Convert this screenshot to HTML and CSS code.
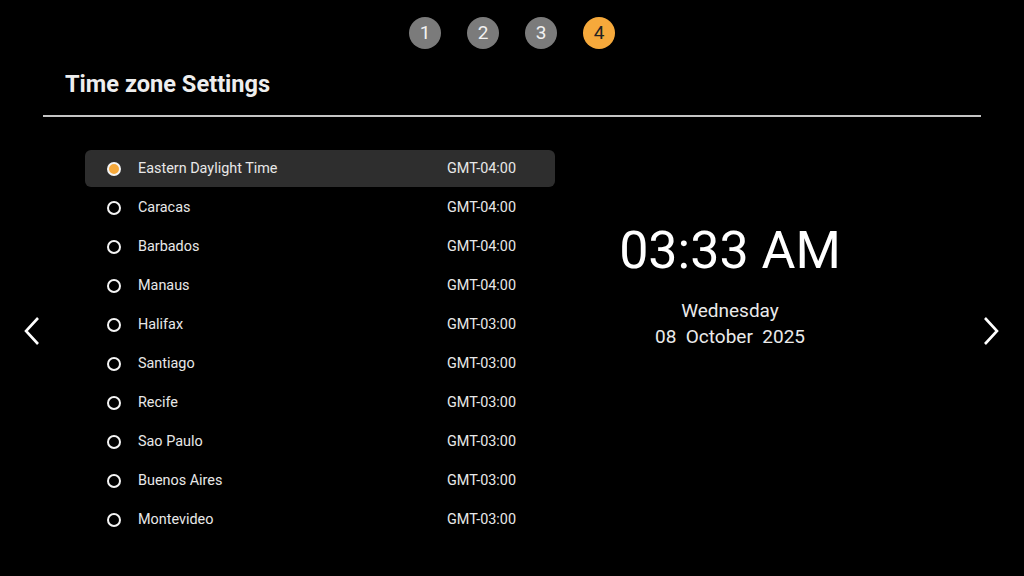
FILE: index.html
```html
<!DOCTYPE html>
<html>
<head>
    <meta charset="utf-8">
    <title>Time zone Settings</title>
    <link rel="stylesheet" href="styles.css">
</head>
<body>
<div class="page">
    <div class="steps">
        <span class="step">1</span>
        <span class="step">2</span>
        <span class="step">3</span>
        <span class="step active">4</span>
    </div>
    <h1 class="title">Time zone Settings</h1>
    <div class="divider"></div>

    <div class="content">
        <div class="nav nav-left">
            <svg width="18" height="30" viewBox="0 0 18 30"><path d="M15 2 L3 15 L15 28" fill="none" stroke="#fff" stroke-width="2.6"/></svg>
        </div>

        <ul class="zones">
            <li class="zone selected"><span class="radio"></span><span class="name">Eastern Daylight Time</span><span class="gmt">GMT-04:00</span></li>
            <li class="zone"><span class="radio"></span><span class="name">Caracas</span><span class="gmt">GMT-04:00</span></li>
            <li class="zone"><span class="radio"></span><span class="name">Barbados</span><span class="gmt">GMT-04:00</span></li>
            <li class="zone"><span class="radio"></span><span class="name">Manaus</span><span class="gmt">GMT-04:00</span></li>
            <li class="zone"><span class="radio"></span><span class="name">Halifax</span><span class="gmt">GMT-03:00</span></li>
            <li class="zone"><span class="radio"></span><span class="name">Santiago</span><span class="gmt">GMT-03:00</span></li>
            <li class="zone"><span class="radio"></span><span class="name">Recife</span><span class="gmt">GMT-03:00</span></li>
            <li class="zone"><span class="radio"></span><span class="name">Sao Paulo</span><span class="gmt">GMT-03:00</span></li>
            <li class="zone"><span class="radio"></span><span class="name">Buenos Aires</span><span class="gmt">GMT-03:00</span></li>
            <li class="zone"><span class="radio"></span><span class="name">Montevideo</span><span class="gmt">GMT-03:00</span></li>
        </ul>

        <div class="clock">
            <div class="time">03:33 AM</div>
            <div class="day">Wednesday</div>
            <div class="date">08&nbsp; October&nbsp; 2025</div>
        </div>

        <div class="nav nav-right">
            <svg width="18" height="30" viewBox="0 0 18 30"><path d="M3 2 L15 15 L3 28" fill="none" stroke="#fff" stroke-width="2.6"/></svg>
        </div>
    </div>
</div>
</body>
</html>
```

FILE: styles.css
```css
html, body, h1, ul, li {
    margin: 0;
    padding: 0;
}

body {
    background: #000;
    color: #e8e8e8;
    font: 14px/1.3 Roboto, "Liberation Sans", sans-serif;
}

.page {
    width: 1024px;
    height: 576px;
    overflow: hidden;
}

.steps {
    display: flex;
    justify-content: center;
    gap: 26px;
    padding-top: 17px;
}

.step {
    width: 32px;
    height: 32px;
    border-radius: 50%;
    background: #7b7b7b;
    color: #f2f2f2;
    font-size: 19px;
    line-height: 32px;
    text-align: center;
}

.step.active {
    background: #f6a93b;
    color: #222;
}

.title {
    margin-top: 21px;
    padding-left: 65px;
    font-size: 23.6px;
    line-height: 28px;
    font-weight: 700;
    color: #eee;
}

.divider {
    margin: 17px 43px 0;
    height: 2px;
    background: #c4c4c4;
}

.content {
    display: flex;
    padding-top: 33px;
}

.nav {
    padding-top: 166px;
}

.nav-left {
    width: 85px;
    padding-left: 23px;
    box-sizing: border-box;
}

.nav-right {
    width: 64px;
    padding-left: 22px;
    box-sizing: border-box;
}

.zones {
    width: 470px;
    list-style: none;
    display: flex;
    flex-direction: column;
    gap: 2px;
}

.zone {
    display: flex;
    align-items: center;
    height: 37px;
    padding: 0 39px 0 22px;
    border-radius: 6px;
    font-size: 14.4px;
}

.zone.selected {
    background: #2e2e2e;
}

.radio {
    width: 10px;
    height: 10px;
    border: 2px solid #f4f4f4;
    border-radius: 50%;
    margin-right: 17px;
    flex-shrink: 0;
}

.selected .radio {
    background: #f6a93b;
}

.name, .gmt {
    padding-top: 2px;
}

.name {
    flex: 1;
}

.clock {
    flex: 1;
    padding: 72px 55px 0 0;
    text-align: center;
    color: #fff;
}

.time {
    font-size: 52px;
    line-height: 58px;
}

.day, .date {
    font-size: 19px;
    line-height: 26px;
    color: #eaeaea;
}

.day {
    margin-top: 18px;
}
```
